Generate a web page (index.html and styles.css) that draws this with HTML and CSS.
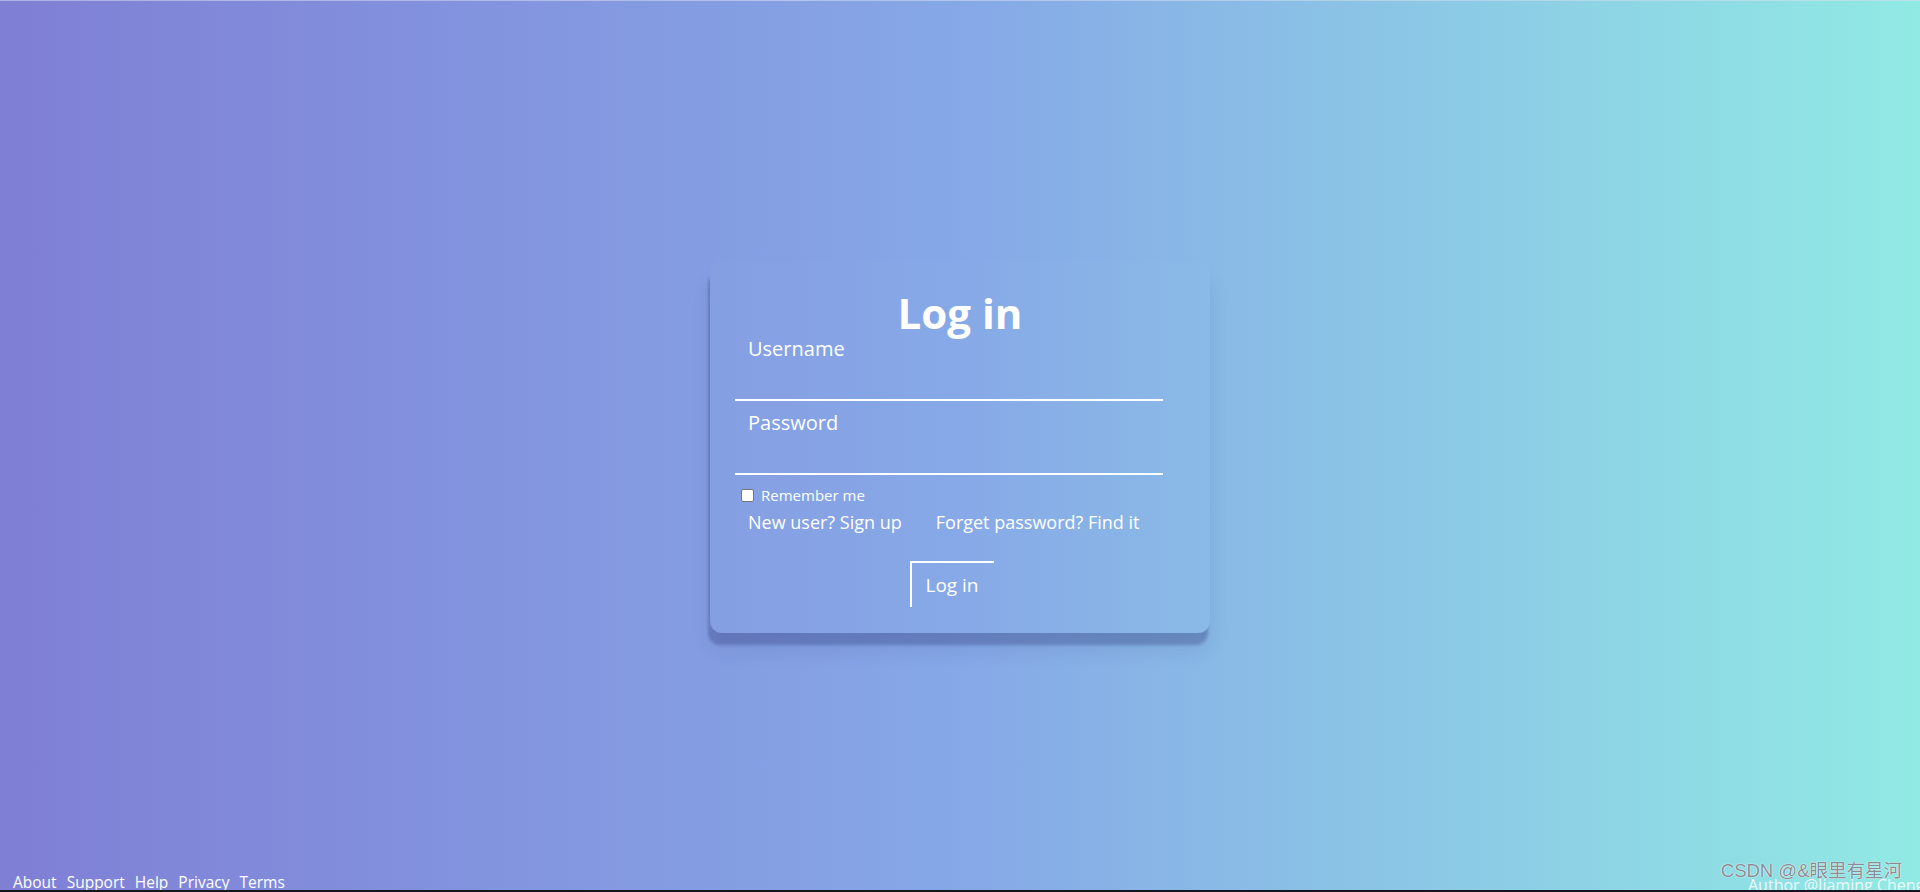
FILE: index.html
```html
<!DOCTYPE html>
<html lang="en">
<head>
<meta charset="utf-8">
<title>Log in</title>
<link rel="stylesheet" href="styles.css">
</head>
<body>
<div class="page">
  <main class="main">
    <form class="card">
      <h2 class="title">Log in</h2>
      <div class="field">
        <label class="label" for="u">Username</label>
        <input class="input" id="u" type="text">
      </div>
      <div class="field field-second">
        <label class="label" for="p">Password</label>
        <input class="input" id="p" type="password">
      </div>
      <div class="remember">
        <input class="check" type="checkbox" id="r">
        <label for="r">Remember me</label>
      </div>
      <div class="links">
        <a class="link" href="#">New user? Sign up</a>
        <a class="link" href="#">Forget password? Find it</a>
      </div>
      <button class="btn" type="button">Log in</button>
    </form>
  </main>
  <footer class="footer">
    <nav class="nav">
      <a href="#">About</a>
      <a href="#">Support</a>
      <a href="#">Help</a>
      <a href="#">Privacy</a>
      <a href="#">Terms</a>
    </nav>
    <div class="author">Author @Jiaming Cheng</div>
    <div class="watermark">CSDN @&amp;眼里有星河</div>
  </footer>
  <div class="bottom-line"></div>
</div>
</body>
</html>
```
FILE: styles.css
```css
html, body {
  margin: 0;
  padding: 0;
  height: 100%;
  overflow: hidden;
}
body {
  font-family: "Open Sans", "Noto Sans", sans-serif;
  color: #fff;
  background: linear-gradient(to right, #7f7fd5, #86a8e7, #91eae4);
}
.page {
  height: 892px;
  display: flex;
  flex-direction: column;
  box-sizing: border-box;
  border-top: 1px solid rgba(215, 220, 235, 0.55);
}
.main {
  flex: 1;
  padding-top: 260px;
  display: flex;
  justify-content: center;
  align-items: flex-start;
}
.card {
  width: 500px;
  box-sizing: border-box;
  padding: 27px 25px 26px;
  border-radius: 12px;
  background: rgba(255, 255, 255, 0.015);
  box-shadow: -2px 12px 3px rgba(35, 45, 110, 0.28), 0 18px 18px rgba(35, 45, 110, 0.1);
}
.title {
  margin: 0;
  font-size: 42px;
  font-weight: 700;
  line-height: 49px;
  text-align: center;
}
.field {
  width: 428px;
}
.field-second {
  margin-top: 10px;
}
.label {
  display: block;
  padding-left: 13px;
  font-size: 20px;
  line-height: 24px;
}
.input {
  display: block;
  width: 100%;
  height: 40px;
  box-sizing: border-box;
  margin: 0;
  padding: 0 13px;
  border: 0;
  border-bottom: 2px solid #fff;
  background: transparent;
  outline: none;
  color: #fff;
  font-family: inherit;
  font-size: 18px;
}
.remember {
  margin-top: 10px;
  padding-left: 6px;
  display: flex;
  align-items: center;
  gap: 7px;
  font-size: 15px;
  line-height: 20px;
}
.check {
  appearance: none;
  -webkit-appearance: none;
  width: 13px;
  height: 13px;
  margin: 0;
  box-sizing: border-box;
  border: 1px solid #767676;
  border-radius: 2px;
  background: #fff;
}
.links {
  margin-top: 5px;
  padding-left: 13px;
  display: flex;
  gap: 34px;
  font-size: 18px;
  line-height: 24px;
}
.link {
  color: #fff;
  text-decoration: none;
}
.btn {
  display: block;
  margin: 27px 0 0 175px;
  width: 84px;
  height: 46px;
  box-sizing: border-box;
  padding: 0 2px 0 0;
  border: 0;
  border-top: 2px solid #fff;
  border-left: 2px solid #fff;
  background: transparent;
  color: #fff;
  font-family: inherit;
  font-size: 19px;
  line-height: 43px;
  text-align: center;
}
.footer {
  position: relative;
  height: 17px;
  display: flex;
  justify-content: space-between;
  align-items: flex-start;
}
.nav {
  display: flex;
  gap: 10px;
  padding-left: 13px;
  font-size: 15.5px;
  line-height: 20px;
  margin-top: -1px;
}
.nav a {
  color: #fff;
  text-decoration: none;
}
.author {
  width: 172px;
  overflow: hidden;
  white-space: nowrap;
  font-size: 16px;
  line-height: 20px;
  color: rgba(255, 255, 255, 0.85);
  margin-top: 2px;
}
.watermark {
  position: absolute;
  right: 18px;
  bottom: 8px;
  font-family: "Liberation Sans", "Noto Sans CJK SC", sans-serif;
  font-size: 18.5px;
  line-height: 22px;
  color: rgba(120, 125, 135, 0.9);
  text-shadow: 0 0 1px #fff, 0 0 1px #fff;
  white-space: nowrap;
}
.bottom-line {
  position: relative;
  height: 2px;
  background: #14161f;
}
```
